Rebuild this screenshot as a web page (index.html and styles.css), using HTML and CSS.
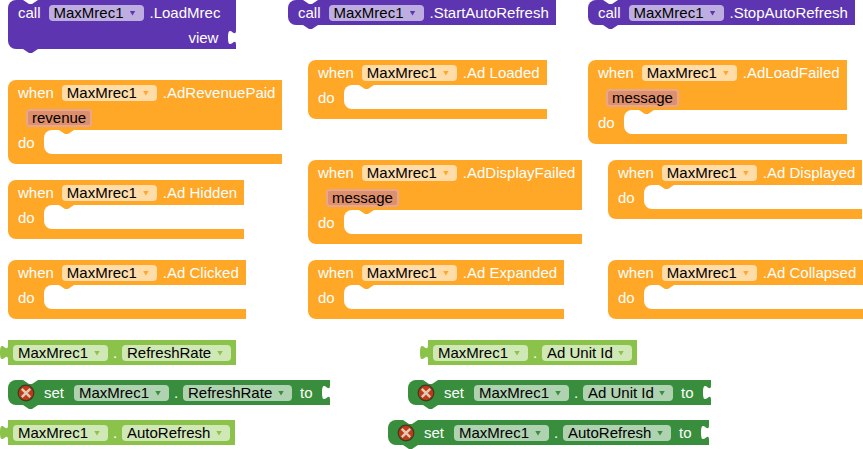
FILE: index.html
```
<!DOCTYPE html>
<html lang="en">
<head>
<meta charset="utf-8">
<title>MaxMrec blocks</title>
<link rel="stylesheet" href="styles.css">
</head>
<body>
<svg class="defs" aria-hidden="true">
  <symbol id="plug" viewBox="0 0 8 25"><path fill="currentColor" d="M8 5c0 10-8-8-8 7.5s8-2.5 8 7.5z"/></symbol>
  <symbol id="error" viewBox="0 0 18 18">
    <circle cx="9" cy="9" r="7.8" fill="#c0391b" stroke="#3f3a22" stroke-width="1.2"/>
    <path d="M4.8 4.8l8.4 8.4M13.2 4.8l-8.4 8.4" stroke="#dccdb2" stroke-width="2.4" fill="none"/>
  </symbol>
</svg>
<main class="workspace" id="workspace"></main>
<script src="blocks.js"></script>
</body>
</html>
```

FILE: styles.css
```
* { box-sizing: border-box; }

body {
  margin: 0;
  background: #fff;
  font-family: "Liberation Sans", Arial, sans-serif;
  font-size: 15px;
  line-height: 25px;
  color: #fff;
}

.defs { position: absolute; width: 0; height: 0; }

.workspace {
  position: relative;
  min-height: 100vh;
  overflow: hidden;
}

.block {
  position: absolute;
  background: var(--hue);
  white-space: nowrap;
}

.call { --hue: #5e35b1; border-radius: 8px 0 0 8px; }
.event { --hue: #ffa726; border-radius: 8px 0 0 8px; padding-bottom: 10px; }
.getter { --hue: #8bc34a; }
.setter { --hue: #388e3c; border-radius: 8px 0 0 8px; }

.call::before, .call::after,
.setter::before, .setter::after,
.slot::before {
  content: "";
  position: absolute;
  left: 15px;
  width: 15px;
  height: 4px;
  clip-path: polygon(0 0, 15px 0, 9px 4px, 6px 4px);
}

.call::before, .setter::before { top: 0; background: #fff; }
.call::after, .setter::after { top: 100%; background: var(--hue); }

.row {
  display: flex;
  align-items: center;
  height: 25px;
  padding: 0 7px 0 10px;
}

.getter .row { padding: 0 5px; }
.setter .row { padding-right: 0; }
.row.input { height: 24px; justify-content: flex-end; padding-right: 0; }
.call .row.wide { padding-right: 16px; }
.row.params { padding-left: 18px; }

.keyword { margin-right: 8px; }
.setter .keyword { margin-right: 10px; }
.name { margin-left: 6px; }
.dot { width: 14px; text-align: center; }
.to { margin: 0 9px 0 8px; }
.view { margin-right: 10px; }

.field { position: relative; display: flex; }

.field::after {
  content: "";
  position: absolute;
  right: 8px;
  top: 6px;
  width: 6px;
  height: 5px;
  background: var(--hue);
  clip-path: polygon(0 0, 100% 0, 50% 100%);
  pointer-events: none;
}

.field select {
  appearance: none;
  margin: 0;
  border: 0;
  border-radius: 4px;
  height: 16px;
  padding: 0 19px 0 5px;
  background: rgba(255, 255, 255, 0.6);
  color: #000;
  font: inherit;
  line-height: 16px;
}

.param {
  border: 2px solid #e8a68f;
  border-radius: 4px;
  height: 18px;
  padding: 0 4px;
  background: #de8f6c;
  color: #000;
  line-height: 14px;
}

.do { display: flex; height: 24px; padding-left: 10px; }
.do span { width: 26px; }

.slot {
  position: relative;
  flex: 1;
  background: #fff;
  border-radius: 8px 0 0 8px;
}
.slot::before { top: 0; background: var(--hue); }

.plug, .socket { width: 8px; height: 25px; flex: none; }
.plug { position: absolute; right: 100%; top: 0; color: var(--hue); }
.socket { color: #fff; }

.error { width: 18px; height: 18px; margin: 0 9px 0 -1px; flex: none; }
```

FILE: blocks.js
```
const blocks = [
  { kind: "call", x: 8, y: 0, name: "LoadMrec", input: "view" },
  { kind: "call", x: 288, y: 0, name: "StartAutoRefresh" },
  { kind: "call", x: 588, y: 0, name: "StopAutoRefresh" },
  { kind: "event", x: 8, y: 80, name: "AdRevenuePaid", param: "revenue" },
  { kind: "event", x: 308, y: 60, name: "Ad Loaded" },
  { kind: "event", x: 588, y: 60, name: "AdLoadFailed", param: "message" },
  { kind: "event", x: 8, y: 180, name: "Ad Hidden" },
  { kind: "event", x: 308, y: 160, name: "AdDisplayFailed", param: "message" },
  { kind: "event", x: 608, y: 160, name: "Ad Displayed" },
  { kind: "event", x: 8, y: 260, name: "Ad Clicked" },
  { kind: "event", x: 308, y: 260, name: "Ad Expanded" },
  { kind: "event", x: 608, y: 260, name: "Ad Collapsed" },
  { kind: "getter", x: 8, y: 340, name: "RefreshRate" },
  { kind: "getter", x: 428, y: 340, name: "Ad Unit Id" },
  { kind: "setter", x: 8, y: 380, name: "RefreshRate" },
  { kind: "setter", x: 408, y: 380, name: "Ad Unit Id" },
  { kind: "getter", x: 8, y: 420, name: "AutoRefresh" },
  { kind: "setter", x: 388, y: 420, name: "AutoRefresh" }
];

const field = (label, value) =>
  `<span class="field"><select aria-label="${label}"><option>${value}</option></select></span>`;
const component = field("Component", "MaxMrec1");
const socket = '<svg class="socket" aria-hidden="true"><use href="#plug"/></svg>';
const property = name => `${component}<span class="dot">.</span>${field("Property", name)}`;

const render = {
  call: b =>
    `<div class="row ${b.input ? "wide" : ""}"><span class="keyword">call</span>${component}<span class="name">.${b.name}</span></div>` +
    (b.input ? `<div class="row input"><span class="view">${b.input}</span>${socket}</div>` : ""),
  event: b =>
    `<div class="row"><span class="keyword">when</span>${component}<span class="name">.${b.name}</span></div>` +
    (b.param ? `<div class="row params"><span class="param">${b.param}</span></div>` : "") +
    '<div class="do"><span>do</span><div class="slot"></div></div>',
  getter: b =>
    `<svg class="plug" aria-hidden="true"><use href="#plug"/></svg><div class="row">${property(b.name)}</div>`,
  setter: b =>
    `<div class="row"><svg class="error" aria-hidden="true"><use href="#error"/></svg><span class="keyword">set</span>${property(b.name)}<span class="to">to</span>${socket}</div>`
};

document.getElementById("workspace").innerHTML = blocks
  .map(b => `<section class="block ${b.kind}" style="left:${b.x}px;top:${b.y}px">${render[b.kind](b)}</section>`)
  .join("");
```
